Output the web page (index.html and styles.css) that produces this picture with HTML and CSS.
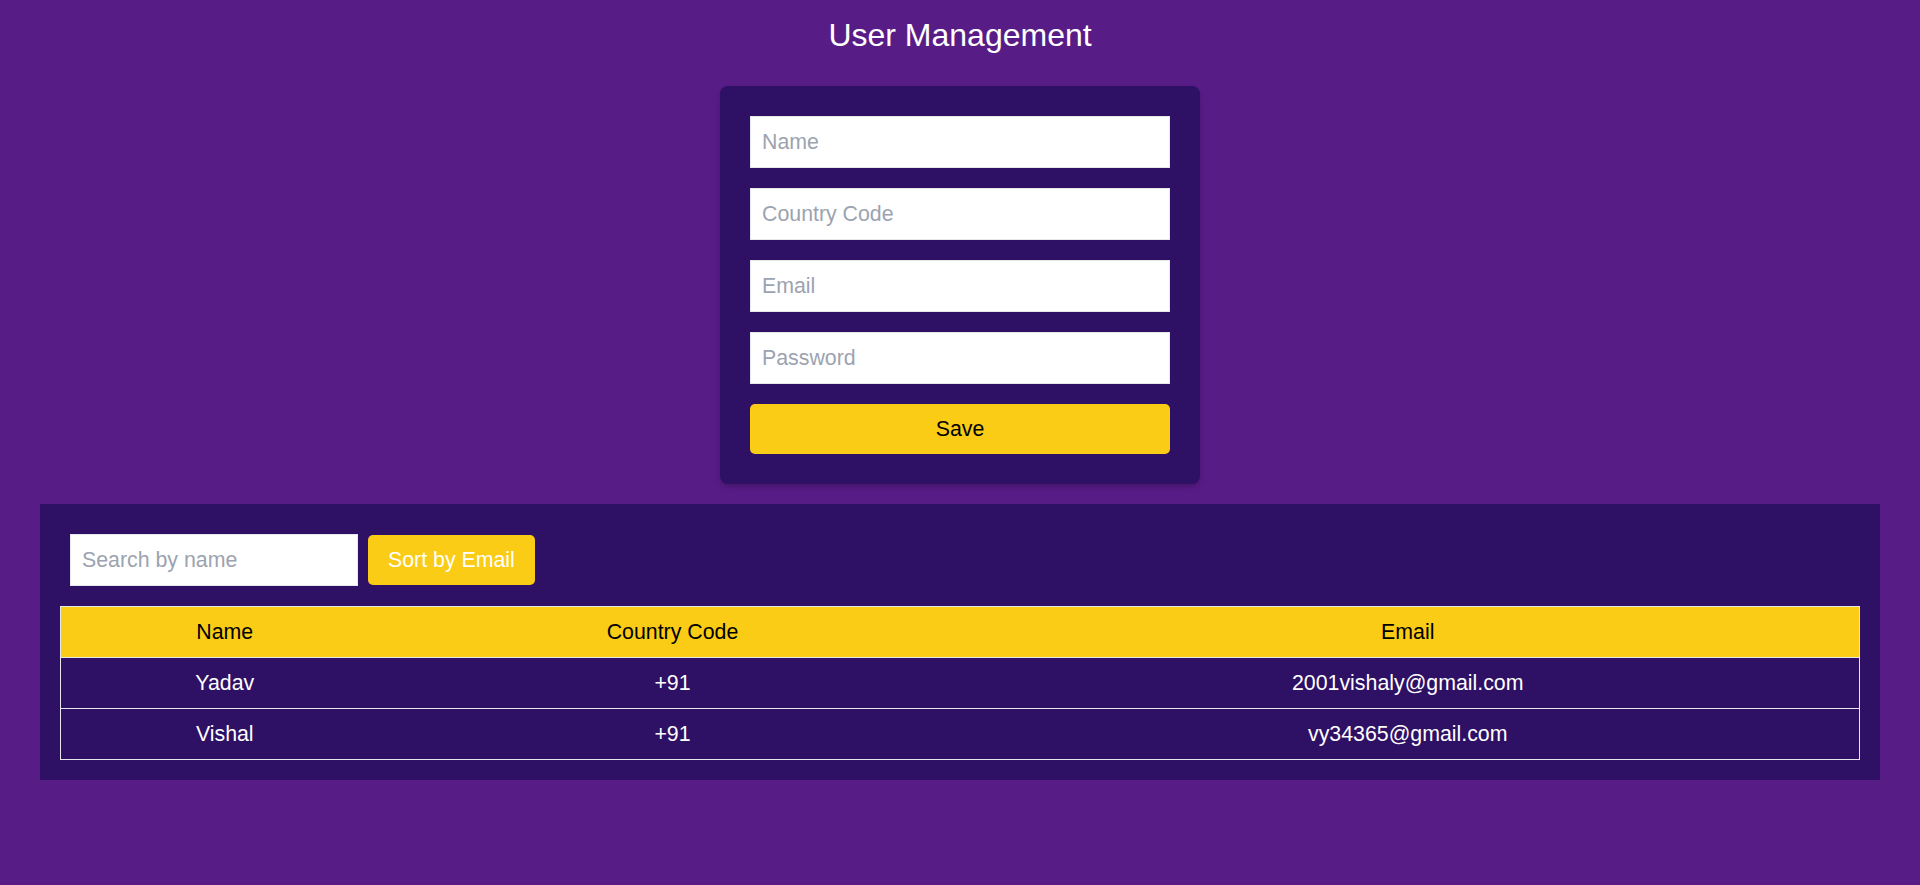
FILE: index.html
```html
<!DOCTYPE html>
<html lang="en">
<head>
<meta charset="utf-8">
<title>User Management</title>
<link rel="stylesheet" href="styles.css">
</head>
<body>
<main class="page">
  <h1 class="title">User Management</h1>
  <form class="card">
    <input class="field" type="text" placeholder="Name">
    <input class="field" type="text" placeholder="Country Code">
    <input class="field" type="email" placeholder="Email">
    <input class="field" type="password" placeholder="Password">
    <button class="save" type="button">Save</button>
  </form>
  <section class="panel">
    <div class="toolbar">
      <input class="search" type="text" placeholder="Search by name">
      <button class="sort" type="button">Sort by Email</button>
    </div>
    <table class="users">
      <colgroup>
        <col class="col-name">
        <col class="col-code">
        <col class="col-email">
      </colgroup>
      <thead>
        <tr><th>Name</th><th>Country Code</th><th>Email</th></tr>
      </thead>
      <tbody>
        <tr><td>Yadav</td><td>+91</td><td>2001vishaly@gmail.com</td></tr>
        <tr><td>Vishal</td><td>+91</td><td>vy34365@gmail.com</td></tr>
      </tbody>
    </table>
  </section>
</main>
</body>
</html>
```
FILE: styles.css
```css
* { box-sizing: border-box; }

html {
  background: #581c87;
}

body {
  margin: 0;
  min-height: 885px;
  background: #581c87;
  font-family: "Liberation Sans", Arial, sans-serif;
  color: #ffffff;
}

.page {
  display: flex;
  flex-direction: column;
  align-items: center;
  padding: 16px 40px 0;
}

.title {
  margin: 0 0 32px;
  font-size: 32px;
  line-height: 38px;
  font-weight: 400;
  color: #ffffff;
}

.card {
  width: 480px;
  padding: 30px;
  background: #2e1065;
  border-radius: 8px;
  box-shadow: 0 4px 6px -1px rgba(0, 0, 0, 0.18), 0 2px 4px -2px rgba(0, 0, 0, 0.14);
  display: flex;
  flex-direction: column;
  gap: 20px;
}

.field,
.search {
  display: block;
  height: 52px;
  margin: 0;
  padding: 0 11px;
  border: 1px solid #e5e7eb;
  border-radius: 0;
  background: #ffffff;
  font-family: inherit;
  font-size: 21.33px;
  color: #111827;
  outline: none;
}

.field { width: 420px; }

.field::placeholder,
.search::placeholder {
  color: #9ca3af;
  opacity: 1;
}

.save {
  width: 420px;
  height: 50px;
  border: 0;
  border-radius: 5px;
  background: #facc15;
  color: #000000;
  font-family: inherit;
  font-size: 21.33px;
  cursor: pointer;
}

.panel {
  align-self: stretch;
  margin-top: 20px;
  padding: 20px;
  background: #2e1065;
}

.toolbar {
  display: flex;
  align-items: center;
  gap: 10px;
  padding: 10px 10px 10px;
  margin-bottom: 10px;
}

.search { width: 288px; }

.sort {
  height: 50px;
  padding: 0 20px;
  border: 0;
  border-radius: 5px;
  background: #facc15;
  color: #ffffff;
  font-family: inherit;
  font-size: 21.33px;
  cursor: pointer;
}

.users {
  width: 100%;
  table-layout: fixed;
  border-collapse: collapse;
  border: 1px solid #e5e7eb;
  font-size: 21.33px;
}

.col-name { width: 328px; }
.col-code { width: 568px; }
.col-email { width: auto; }

.users th,
.users td {
  padding: 0 8px;
  text-align: center;
  font-weight: 400;
  border-bottom: 1px solid #e5e7eb;
}

.users th {
  height: 51px;
  background: #facc15;
  color: #000000;
}

.users td {
  height: 51px;
  color: #ffffff;
}
```
